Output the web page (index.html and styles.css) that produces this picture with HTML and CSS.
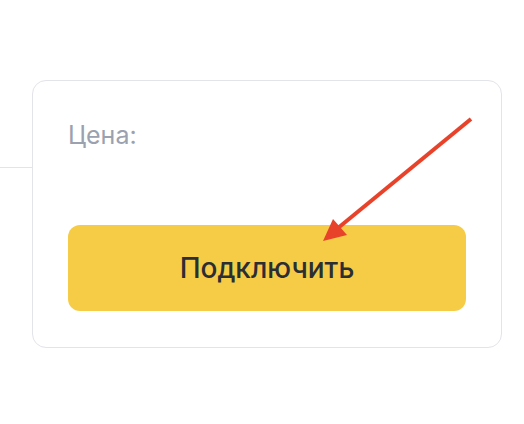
FILE: index.html
```html
<!DOCTYPE html>
<html lang="ru">
<head>
<meta charset="utf-8">
<link rel="stylesheet" href="styles.css">
</head>
<body>
<div class="page">
  <div class="rail"><div class="rail-line"></div></div>
  <div class="card">
    <div class="price-label">Цена:</div>
    <button class="connect-btn">Подключить</button>
  </div>
  <svg class="arrow" width="524" height="424" viewBox="0 0 524 424">
    <line x1="471" y1="119" x2="338" y2="228" stroke="#e8432a" stroke-width="4" stroke-linecap="butt"/>
    <polygon points="323,241 333,219 347,235" fill="#e8432a"/>
  </svg>
</div>
</body>
</html>
```
FILE: styles.css
```css
html, body {
  margin: 0;
  padding: 0;
  background: #ffffff;
}
body {
  width: 524px;
  height: 424px;
  overflow: hidden;
  font-family: Inter, "Noto Sans", sans-serif;
}
.page {
  position: relative;
  display: flex;
  align-items: flex-start;
  padding-top: 80px;
}
.rail {
  width: 32px;
  padding-top: 87px;
}
.rail-line {
  height: 1px;
  background: #e3e3ea;
}
.card {
  box-sizing: border-box;
  width: 470px;
  height: 268px;
  border: 1px solid #e3e3ea;
  border-radius: 14px;
  padding: 0 35px;
}
.price-label {
  margin-top: 39px;
  font-size: 25px;
  line-height: 30px;
  color: #9ba1ae;
}
.connect-btn {
  display: block;
  margin-top: 75px;
  width: 398px;
  height: 86px;
  border: none;
  border-radius: 12px;
  background: #f6cc47;
  color: #2b2e33;
  font-family: Inter, "Noto Sans", sans-serif;
  font-size: 28px;
  font-weight: 500;
  padding: 0;
}
.arrow {
  position: absolute;
  left: 0;
  top: 0;
  pointer-events: none;
}
```
